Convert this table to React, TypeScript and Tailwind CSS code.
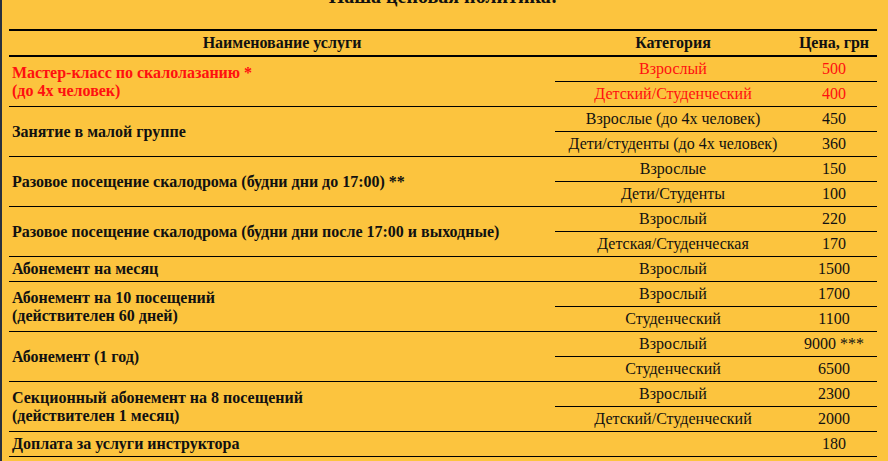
import React from 'react';

type Sub = { cat: string; price: string };
type Row = { name: string[]; subs: Sub[]; red?: boolean };

const rows: Row[] = [
  {
    name: ['Мастер-класс по скалолазанию *', '(до 4х человек)'],
    subs: [
      { cat: 'Взрослый', price: '500' },
      { cat: 'Детский/Студенческий', price: '400' },
    ],
    red: true,
  },
  {
    name: ['Занятие в малой группе'],
    subs: [
      { cat: 'Взрослые (до 4х человек)', price: '450' },
      { cat: 'Дети/студенты (до 4х человек)', price: '360' },
    ],
  },
  {
    name: ['Разовое посещение скалодрома (будни дни до 17:00) **'],
    subs: [
      { cat: 'Взрослые', price: '150' },
      { cat: 'Дети/Студенты', price: '100' },
    ],
  },
  {
    name: ['Разовое посещение скалодрома (будни дни после 17:00 и выходные)'],
    subs: [
      { cat: 'Взрослый', price: '220' },
      { cat: 'Детская/Студенческая', price: '170' },
    ],
  },
  {
    name: ['Абонемент на месяц'],
    subs: [{ cat: 'Взрослый', price: '1500' }],
  },
  {
    name: ['Абонемент на 10 посещений', '(действителен 60 дней)'],
    subs: [
      { cat: 'Взрослый', price: '1700' },
      { cat: 'Студенческий', price: '1100' },
    ],
  },
  {
    name: ['Абонемент (1 год)'],
    subs: [
      { cat: 'Взрослый', price: '9000 ***' },
      { cat: 'Студенческий', price: '6500' },
    ],
  },
  {
    name: ['Секционный абонемент на 8 посещений', '(действителен 1 месяц)'],
    subs: [
      { cat: 'Взрослый', price: '2300' },
      { cat: 'Детский/Студенческий', price: '2000' },
    ],
  },
  {
    name: ['Доплата за услуги инструктора'],
    subs: [{ cat: '', price: '180' }],
  },
];

const cell = 'border-b border-black py-[3px] leading-[18px] align-middle';

const App: React.FC = () => {
  return (
    <div
      className="min-h-screen bg-[#fcc43e] border-l-2 border-[#28303d] text-[#111] text-[16px] overflow-hidden"
      style={{ fontFamily: '"Liberation Serif", "Times New Roman", serif' }}
    >
      <div className="ml-[7px] w-[868px]">
        <h3 className="-mt-[15px] mb-[21px] text-center text-[20px] leading-[23px] font-bold">
          Наша ценовая политика:
        </h3>
        <table className="w-[868px] table-fixed border-separate border-spacing-0">
          <colgroup>
            <col className="w-[546px]" />
            <col className="w-[236px]" />
            <col className="w-[86px]" />
          </colgroup>
          <thead>
            <tr>
              <th className="border-t-2 border-b-2 border-black py-[3px] leading-[18px] font-bold text-center">
                Наименование услуги
              </th>
              <th className="border-t-2 border-b-2 border-black py-[3px] leading-[18px] font-bold text-center">
                Категория
              </th>
              <th className="border-t-2 border-b-2 border-black py-[3px] leading-[18px] font-bold text-center">
                Цена, грн
              </th>
            </tr>
          </thead>
          <tbody>
            {rows.map((row, i) =>
              row.subs.map((sub, j) => (
                <tr key={`${i}-${j}`}>
                  {j === 0 && (
                    <td
                      rowSpan={row.subs.length}
                      className={`${cell} px-[3px] text-left font-bold ${row.red ? 'text-[#ff1010]' : ''}`}
                    >
                      {row.name.map((line) => (
                        <div key={line}>{line}</div>
                      ))}
                    </td>
                  )}
                  <td className={`${cell} text-center ${row.red ? 'text-[#ff1010]' : ''}`}>{sub.cat}</td>
                  <td className={`${cell} text-center ${row.red ? 'text-[#ff1010]' : ''}`}>{sub.price}</td>
                </tr>
              ))
            )}
          </tbody>
        </table>
      </div>
    </div>
  );
};

export default App;
